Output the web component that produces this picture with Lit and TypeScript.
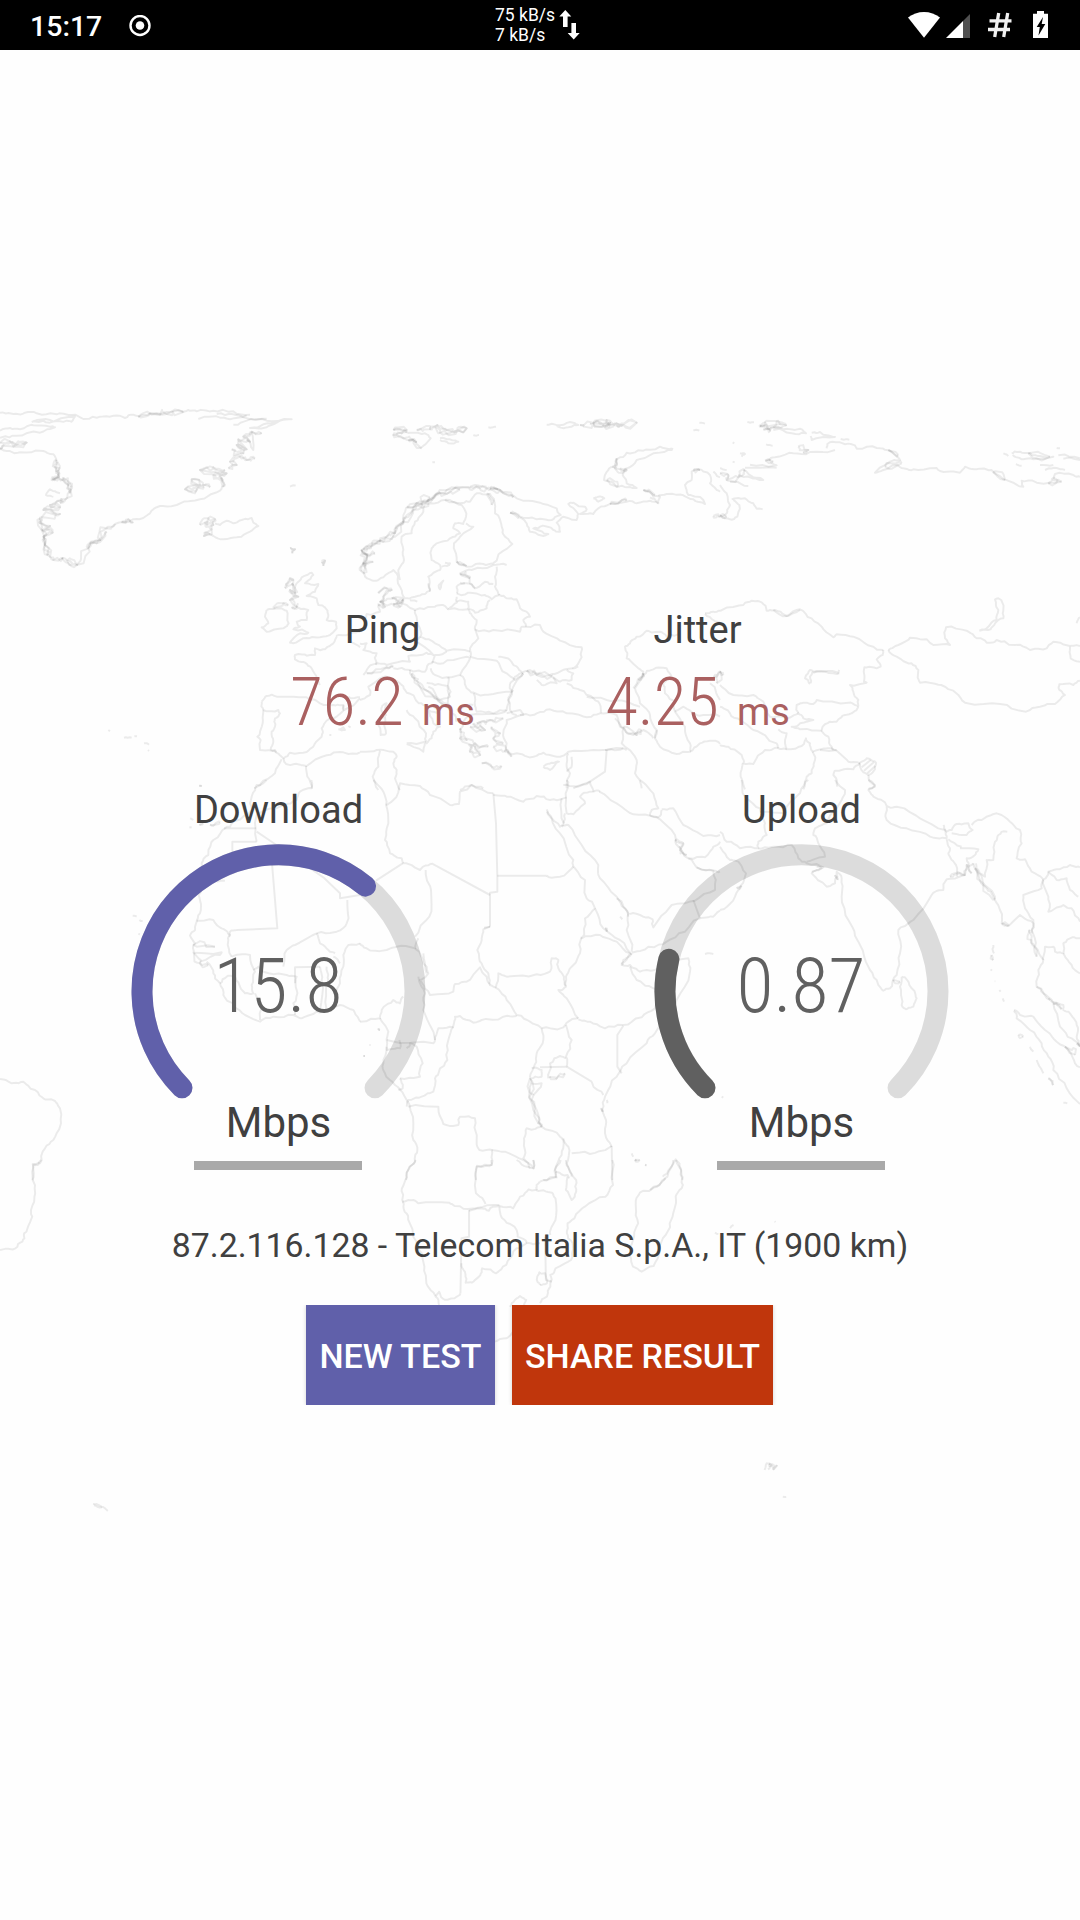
import { LitElement, html, svg, css } from "lit";
import { customElement, property } from "lit/decorators.js";

/* Map outlines. Each tile has its own origin and scale; a line is "kind x,y x,y ...",
   where the kind is s (straight), r (slightly rugged), R (fjord coast). */
interface Tile { x: number; y: number; sx: number; lines: string[] }

const TILES: Tile[] = [
  { x: 0, y: 390, sx: 1 / 3, lines: [
    "r 0,68 40,72 75,68 110,70 170,73 215,75 250,87 300,80 340,77 375,84 400,74 440,75 500,66 550,66 565,60 590,64 640,62 700,64 750,74",
    "R 415,80 450,70 500,72 550,66", "r 595,87 660,83 690,88 740,76", "r 650,72 700,73 730,82 800,92 875,88 830,98 800,112 750,114 790,103 830,98",
    "r 700,104 740,92 800,86", "r 0,122 30,114 60,118 100,106 150,110 165,112 120,128 50,137 0,143", "r 95,96 150,90 200,92 215,95 225,80 150,98 100,94",
    "R 0,158 30,154 50,164 80,158 40,170 10,166 0,175", "r 0,175 20,183 60,187 130,183 160,193 170,215",
    "R 170,210 165,232 178,250 160,268 185,270 210,280 212,300 200,325 180,340", "R 172,215 176,260 155,272", "R 190,262 205,285 210,310",
    "r 180,310 150,298 138,315 160,320", "R 190,335 150,345 180,352 130,360 180,372 125,382 120,400 150,408 128,420 158,428 130,440 135,465 150,500 160,510 190,505",
    "R 120,385 125,420 135,460 145,495", "R 185,505 210,525 230,525 200,512", "R 230,525 265,475 300,450 320,415 345,402",
    "r 345,402 385,396 430,384 450,370 480,348 530,345 600,328 660,302 672,285 660,262", "R 260,468 290,460 320,425", "R 365,395 385,388 400,396",
    "R 672,290 665,265 640,255 680,250 600,240 640,232 675,240", "R 630,292 610,285 575,268 600,285 555,298 590,300 612,290",
    "R 685,235 710,225 690,215 720,200 740,210 765,206", "R 695,178 730,190 710,165 740,178 715,148 750,155 730,140 755,125 785,128", "r 755,125 760,180 740,150",
    "r 870,290 887,286",
    "R 600,405 625,385 645,388 640,405 615,398 635,418 612,438 630,432", "r 645,400 660,405 680,392 700,400 725,390 755,384 760,398 775,408 750,425 710,442 670,448 640,438 630,430",
    "R 870,475 885,478 877,490", "R 965,520 975,512 970,528", "r 325,1020 330,1024", "r 372,1043 395,1043", "r 403,1039 411,1039", "r 432,1060 447,1064", "r 444,1080 447,1083", "r 597,1188 605,1188",
    "R 855,595 870,565 880,570 860,590", "R 875,580 885,610 870,600 895,620 870,630 890,650 875,655",
    "r 885,610 890,580 905,562 935,548 940,555 915,580 955,582 945,605 920,618 950,625 955,645 975,652 985,675 980,690 1008,695 1010,715 990,735 960,742 920,744 880,760 870,758 900,730 925,728 880,718 900,710 890,695 920,690 925,660 890,650 895,640",
    "r 800,660 830,655 860,662 866,700 850,715 800,725 785,712 805,700 795,680 800,660", "R 822,655 850,640 865,645",
    "r 1010,740 1000,760 975,778 945,775 945,795 920,797 885,795 885,808 915,818 935,835 950,865 960,885",
    "r 1008,738 1050,730 1080,725", "r 1050,755 1080,772",
    "r 785,935 800,918 815,914 830,920 920,922 960,940 1000,945 1030,945 1030,962 990,985 965,1015 965,1040 940,1070 920,1086 870,1088 850,1105 825,1080 780,1080 782,1050 772,1040 788,1000 790,965 785,935",
    "r 790,960 835,960 840,970 825,985 825,1010 815,1025 820,1055 812,1078 830,1085", "r 1015,1018 1030,1012 1035,1020 1015,1018", "r 1045,1008 1052,1012", "r 988,1035 994,1035",
    "r 850,1105 858,1122 900,1124 920,1128 980,1096 1030,1087 1080,1087", "r 845,1108 825,1150 790,1172 763,1195", "r 918,1128 922,1160 935,1195",
    "r 1030,945 1032,960 1080,925", "r 1045,920 1080,922"
  ] },
  { x: 360, y: 390, sx: 1 / 3, lines: [
    "R 100,120 140,120 125,130 100,135 130,145 160,150 185,175", "r 185,172 212,145 195,130 150,128 130,120 100,120", "R 170,120 210,118 232,105 260,120 320,115 290,125 240,128 225,112",
    "r 240,145 270,148 295,155 265,160 240,150", "R 145,150 170,158", "r 340,135 357,135", "r 385,112 408,110", "r 217,217 225,217",
    "r 560,104 600,106 640,98 655,105 625,112 590,108", "R 660,105 700,98 740,90 770,100 830,98 780,104 730,106 690,100", "R 700,98 750,98 735,108", "r 1018,98 1035,101", "r 1000,121 1018,122",
    "r 935,175 900,170 850,182 800,188 770,208 765,230 745,240 732,270 770,290 800,292 830,294 800,280 788,255 800,235 830,210 880,190 935,180 938,174", "R 770,205 765,235 800,240 780,235", "R 740,270 775,288",
    "r 850,300 880,320 900,320 895,340 870,322", "R 850,300 885,315", "r 895,318 920,312 970,316 1000,328 1035,342 1030,330 985,315 975,285 995,270 995,245 1015,238 1050,255 1050,280 1070,300 1080,305", "r 1060,245 1080,262", "R 1000,240 1020,240", "R 1060,378 1080,380",
    "r 700,325 715,320 733,325 715,335 700,325",
    "r 400,290 430,310 470,325 540,338 590,355 602,375 575,390 530,388 480,380 450,368", "R 390,295 420,300 460,322", "R 450,368 478,382",
    "r 480,382 500,400 510,425 550,438 565,432 520,415 540,410 580,420 600,425 590,398 610,380 650,390 655,372 625,342 640,338 675,350 680,358 660,372 700,372 715,355 755,340 800,335 830,340 870,332 895,340",
    "R 750,342 800,332",
    "R 5,545 10,520 5,480 50,460 80,440 105,430 130,395 160,360 185,335 230,312 260,300 310,292 350,290 380,295 415,298", "R 10,478 60,452 100,438 130,400 160,352 205,330 240,310 300,298", "R 140,350 170,340 210,322", "R 5,480 20,510 10,550", "R 10,490 45,490", "R 8,520 40,515", "r 330,290 345,285 380,290",
    "r 5,545 15,560 40,572 70,562 100,540 110,550 120,590 135,625 165,620 195,612 210,600 205,560 240,540 240,525 215,510 215,475 230,460 270,445 300,430 280,415 285,400 310,402 318,380 305,345 270,330 225,340 195,342 190,365 165,395 155,430 125,440 130,480 132,510 115,540 120,570",
    "r 245,530 270,520 255,518", "r 255,330 300,340 330,335 350,310 390,312 405,345 405,370 425,410 435,440 457,462 410,512 370,522 320,530 290,515 282,460 300,440 340,410 318,400", "R 290,515 320,528", "R 385,310 395,345",
    "r 235,585 250,572 240,598 235,585", "r 205,580 210,605", "r 440,525 400,525 335,540 300,550 330,560 330,580 345,595 375,575 400,582", "R 300,552 330,565", "r 410,530 405,560 405,590 418,615", "r 300,578 318,580 345,595",
    "r 290,610 290,590 315,580", "r 290,610 330,608 375,615 395,628 418,615 440,625 470,628 480,655 510,680 490,690 498,710", "r 390,630 380,655 345,668 325,655 325,635 290,635", "r 290,620 290,638 265,658 325,658",
    "r 110,640 140,645 165,660 225,650 245,645 265,658", "r 325,658 335,675 350,690 345,710 355,745 330,775 330,800", "r 345,718 400,720 480,725 485,710 540,705 550,725 600,752 665,772 665,802 640,835 655,830", "r 165,660 172,700 182,740 225,760 260,782 330,785",
    "R 55,610 80,595 95,600 70,620 60,635 75,650 55,645", "R 95,625 130,628 120,650 100,640", "R 60,635 110,640 130,630", "r 150,630 172,635", "r 55,640 60,665 20,672 15,690",
    "r 0,760 20,760 10,780 50,790 48,825", "r 182,740 165,755 220,795 200,788 145,798 150,815 80,825 50,820 20,840 10,855", "R 20,850 80,832 100,830", "r 100,835 150,840 195,845 215,820 225,795 260,785",
    "r 215,815 250,820 320,800 330,805 300,855 260,862 225,855 212,835", "r 330,800 410,812 440,850 465,870 490,850", "r 415,800 450,810 475,835 485,850 465,860 450,880", "r 300,855 320,895 350,912 400,912 455,905 450,880",
    "r 265,860 272,905 265,920 270,950", "r 150,840 165,870 205,905 250,945 285,975 290,995", "r 200,878 225,885 262,888 270,920 240,930 205,890", "R 155,850 180,890 225,925 260,950",
    "r 0,930 30,915 25,890 60,865 90,862 120,880 135,900 165,925 190,945 235,960 230,968 205,960 220,1000 240,1010 220,1025 215,1045 200,1060 198,1030 165,985 140,960",
    "r 60,985 75,980 78,1030 62,1035 55,1005 60,985", "r 68,945 80,940 78,975 65,965 68,945", "r 140,1060 195,1055 190,1085 140,1062",
    "r 340,910 345,945 350,965 400,970 440,960 445,930 460,900", "r 290,960 320,945 340,945", "r 300,1020 330,975 400,972 440,960",
    "R 300,1015 320,1050 300,1045 345,1070 360,1095 330,1085 345,1060 385,1070", "R 340,1000 375,1020 330,1010", "R 350,1000 390,990 430,985", "R 365,1120 395,1130 425,1128", "R 395,1010 420,1030 400,1045 430,1060", "R 400,1070 440,1080 455,1100",
    "r 440,970 480,960 490,975 440,990 430,1030 440,1060 435,1085 470,1090 520,1100 550,1088 590,1100 625,1085 700,1080 790,1075 800,1080",
    "r 550,1130 575,1118 597,1115 570,1140 550,1130", "r 480,975 530,970 570,958 620,970 680,982 720,970 722,950 700,925 660,900 620,880",
    "r 490,850 460,890 445,930 450,960 470,975", "r 485,850 510,840 540,852 570,855 600,845 640,835", "r 530,870 545,885 560,882 590,880 575,855", "R 500,842 530,855 575,860", "r 580,862 600,875 635,870 640,850 620,840",
    "r 680,920 740,930 800,935 840,950", "r 722,970 770,975 780,1010 820,1035 850,1020 880,1045", "r 765,985 790,1015 785,1060 830,1110 825,1150 845,1195", "R 790,1010 830,1035 845,1020",
    "r 850,850 825,895 840,940 870,975 890,1020 885,1045", "r 850,855 880,838 920,835 935,860 910,880 915,910 945,935 945,965 975,1010 990,1060 990,1085 950,1092 900,1070 885,1045 890,1020",
    "r 945,965 970,950 1000,970 1030,975 1080,980", "r 990,1085 1020,1060 1050,1052 1080,1062", "r 820,895 850,845 830,830 800,805 795,770 810,760 830,740 860,722 900,725 920,740 960,735",
    "R 835,870 850,850", "r 1035,670 1060,665 1080,662", "r 1035,672 1060,690 1080,695", "R 1060,860 1080,845 1070,880", "r 1050,880 1080,930",
    "r 0,1085 50,1080 100,1085 110,1100 100,1120 110,1140 105,1165 120,1200", "r 60,1082 55,1130 38,1160 55,1200", "r 300,1200 335,1185 370,1195",
    "s 740,1080 735,1145 690,1175", "r 625,1090 620,1130 630,1150 620,1195", "r 690,1175 640,1195", "r 635,1100 635,1130 620,1145", "r 735,1080 790,1075"
  ] },
  { x: 720, y: 390, sx: 1 / 3, lines: [
    "r 82,96 102,97", "R 118,110 135,97 170,94 198,106 160,112 150,122 130,118", "R 120,108 150,118", "r 160,112 190,118 240,116 258,130 215,130 160,120", "r 275,128 300,126 345,141 275,150 272,138", "r 362,147 388,149",
    "r 320,175 322,162 360,157 405,166 410,176 470,174 500,180 535,203 540,210 510,215 465,248 490,240 530,225 550,235 580,238 650,234 660,243 720,248 735,230 770,238 815,240 850,268 910,290 905,272 950,278 1025,275",
    "R 505,180 535,195", "R 235,170 265,180 250,186", "r 90,224 170,226 140,214 165,202 220,190 270,186 345,180", "R 135,212 160,215", "R 495,230 545,220", "R 820,245 855,270", "r 138,163 158,167", "r 60,190 75,192 65,200", "r 38,157 43,160", "r 38,215 44,217",
    "r 850,190 865,198", "r 875,190 900,185 930,190 960,198 1000,200 940,208 905,208 878,195", "R 925,190 990,200", "r 1010,174 1020,175", "r 1015,196 1080,205", "r 1030,206 1080,210", "r 888,222 905,227", "r 960,225 1000,225", "r 975,240 1010,234 1035,240", "r 1025,275 1000,270 1005,252 1060,255 1080,260", "R 985,280 1010,268",
    "r 0,235 20,240", "R 0,250 25,255 20,270 55,262 75,240", "r 30,275 85,288", "r 55,255 90,262 130,270 100,262 70,240", "r 75,233 170,233", "r 35,328 75,325 100,340 110,356 128,358", "r 0,285 20,310 30,345 20,370 0,380", "r 40,330 58,345 52,380 30,388 0,378", "R 0,376 20,380",
    "r 0,663 70,645 95,632 125,637 140,662 165,660 200,678 240,658 275,685 305,710 340,742 350,733 400,740 460,770 490,780", "r 160,660 205,678 240,660",
    "r 505,780 535,765 570,743 620,748 640,765 690,765 675,745 678,712 740,722 770,745 800,758 830,750 885,765 930,780 980,775 1000,755 1050,768 1080,768", "r 1050,770 1052,805 1080,815", "r 1070,700 1080,682",
    "r 505,780 530,800 575,820 595,840 600,878 655,884 700,902 735,938 840,942 918,965 960,950 1005,942 1035,915 1018,900 1018,883 1060,885 1080,872",
    "r 778,722 800,715 830,690 835,660 825,628 835,625 850,660 850,685 825,700 812,718 778,722",
    "r 490,780 488,795 470,808 482,830 470,835 433,832 432,875 440,878 390,885 400,905 415,930 415,948 385,938 290,930 280,942 250,938 230,945 235,970",
    "r 270,882 255,865 270,840 290,845 355,848 358,840", "r 358,850 340,850 290,843 270,860 272,880", "r 415,950 395,970 375,975 350,995 330,995 308,1010 305,1022 325,1040 335,1070 340,1080",
    "r 0,885 40,915 100,915 130,935 150,980 200,985 235,970 250,985 280,990 240,1000 215,1010 240,1018 305,1022", "r 0,950 30,970 60,990 100,1020 170,1060 175,1075", "r 175,1018 200,1030 195,1060 200,1078 245,1068 258,1045 270,1060 278,1085 320,1075 350,1082 385,1115 420,1120",
    "r 0,1065 25,1070 65,1095 70,1120 100,1122 135,1080 170,1073 200,1078", "r 68,1120 62,1160 75,1198", "r 278,1085 285,1110 275,1150 260,1160 250,1198", "r 300,1080 350,1080",
    "r 420,1118 440,1105 468,1118 465,1138 445,1155 420,1130 420,1118", "s 425,1132 452,1110", "s 432,1142 462,1116", "s 442,1150 466,1128", "r 445,1155 450,1175 465,1190 445,1198", "r 420,1120 400,1138 345,1142 340,1155 352,1190", "R 0,845 10,855"
  ] },
  { x: 0, y: 780, sx: 1 / 3, lines: [
    "r 598,16 606,18", "r 570,115 580,120", "r 568,142 575,142", "R 598,135 610,130", "R 630,134 660,128", "r 935,0 935,25 900,35 890,60 850,75 770,105 770,185", "r 800,0 770,15 755,50 755,90 700,125 675,145 640,180 625,225 605,250 600,300 596,345 603,380 600,400 590,425 585,450 570,467 585,490 580,520",
    "s 672,145 768,145", "s 770,155 825,192 970,292 1020,340 1020,355 1080,345", "s 770,185 697,185 697,230", "s 816,250 832,445 710,450", "r 590,422 640,420 665,445 690,465 685,480 695,530", "r 710,450 690,455 688,470", "R 580,495 645,500", "r 580,518 665,517 660,525 600,545", "R 582,520 600,550 625,555",
    "r 620,545 640,580 660,610 670,645 700,670 735,705 780,725 820,710 880,705 905,715 950,695 985,690 1020,675 1060,690 1080,725",
    "r 695,530 750,525 765,575 755,615 760,640 735,640 720,620", "r 760,570 775,560 790,575 860,585 890,590 890,630 880,670 885,705", "r 780,720 785,680 765,640", "r 660,610 680,590 705,590 720,620",
    "r 850,560 860,510 885,495 950,460 1010,455 1040,430 1042,360", "s 885,610 885,562 960,560", "r 950,460 960,490 985,510 1005,520", "r 960,560 965,600 960,690", "r 980,560 985,600 980,690", "r 1080,490 1045,495 1030,525 1030,560 1020,610 1005,640 1008,680", "r 1000,530 1020,550",
    "r 398,407 410,410", "r 418,420 428,423", "r 415,462 420,463", "r 650,305 675,302",
    "r 0,897 35,910 70,905 105,930 130,955 165,963 180,985 183,1030 160,1080 135,1105 120,1150 100,1155 97,1200"
  ] },
  { x: 360, y: 780, sx: 1 / 3, lines: [
    "r 40,0 70,35 78,75 85,130 75,180 90,220 125,235 130,250", "r 78,75 100,60 120,10 180,18 210,45 270,75 297,72 300,35 335,15 400,40", "s 400,40 408,130 412,290 412,335 390,338 390,440", "s 48,302 128,250", "r 128,250 180,270 215,250", "s 215,250 390,345",
    "r 400,45 440,50 490,65 530,48 570,60 620,52", "s 412,287 560,287", "r 560,287 600,290 640,260", "r 197,270 213,330 208,410 165,470", "r 0,490 20,505 80,510 110,500 165,505 175,475", "r 165,505 180,520 200,560 205,580 180,600 210,645 280,635 285,612 320,605 360,562 380,590 390,615",
    "r 175,590 195,640 190,690 225,780 220,790 80,780", "r 190,520 200,580", "r 390,440 370,448 365,475 352,510 365,550 385,580 388,612", "s 390,440 372,443", "r 388,615 408,620 415,580 440,590 530,583 570,575 575,535 595,540 595,565 612,590 618,620 595,630 620,655 655,715",
    "r 405,622 440,660 470,705 510,725 545,745 610,742 625,725 655,715", "r 665,470 660,520 635,560 618,590 618,618", "r 640,260 675,300 680,355 705,385 675,415 665,475 720,465 770,485 810,520 785,550 790,555",
    "r 560,88 570,110 600,140 610,135 615,100", "r 560,95 600,160 640,240 640,260", "r 605,140 625,135 665,195 715,255 720,295 770,350 805,400 800,450 815,515", "R 735,445 740,455", "r 705,385 730,445 780,480 815,525", "r 780,410 787,418", "r 770,355 805,410",
    "r 620,0 625,20 620,100 640,103 675,70 660,50 690,35 720,35", "r 605,55 612,130", "r 610,15 655,20 690,5 700,35", "r 718,35 770,70 820,103 895,112 905,90", "r 840,0 880,40 895,85 875,90 870,105 900,118 945,165 955,200 985,235 1010,262 1065,272 1080,275",
    "r 905,88 940,85 970,135 1030,168 1080,165", "R 945,180 970,190 960,210 980,225", "r 985,235 1035,232 1060,200 1080,185", "r 1010,262 1060,272 1065,330 1005,362 935,375 880,442 878,418 840,405 808,402", "s 1000,360 1020,415", "r 1020,415 1060,410 1080,392", "r 1020,415 975,455 920,485 865,500 815,518",
    "r 815,520 790,540 785,555 810,555 840,575 885,570 985,535 990,575 950,660 885,760 860,790 800,850 770,890 735,950 728,985 738,1020 735,1060 755,1100", "r 810,560 830,600 880,625 920,630 885,685 845,712 790,735 735,745 690,725 655,718", "s 790,737 772,765 772,860 785,880", "r 1035,522 1060,522",
    "r 80,780 80,810 120,805 118,780", "r 80,800 70,850 75,880 105,915 140,960 160,1030 160,1080 172,1110 165,1145 145,1170 138,1200", "r 145,980 235,980 250,1032 295,1035 300,1010 345,1015 350,1080 358,1110 395,1110 395,1155 350,1160 348,1200",
    "r 0,725 60,715 65,690 100,660 120,670 130,650", "r 60,715 85,755 80,780", "R 55,745 60,750", "r 28,795 32,795", "R 10,828 15,828", "r 225,780 235,745 278,742 265,780 262,840 240,865 225,895 220,935 185,950 145,960 140,980", "r 120,895 180,890 188,850 170,800 150,790 140,805", "r 120,895 128,925 115,930",
    "r 278,745 285,710 300,708 340,728 365,720 430,710 470,708", "r 545,745 550,780 530,820 520,865 510,890 510,930 520,990 545,1040", "R 510,895 515,960 535,1030 545,1040", "r 515,865 545,870 545,890 515,895", "s 540,862 620,860", "r 515,910 545,910 520,945", "r 618,735 635,780 618,830 620,860", "s 620,860 695,905", "r 695,905 730,945", "r 565,895 570,850 600,828 618,835", "R 568,890 590,895 615,880",
    "r 545,1040 600,1070 610,1080 605,1125 585,1170 590,1195", "r 545,1040 500,1045 492,1075 495,1110 490,1135 520,1165 520,1140", "r 395,1110 435,1115 490,1140 510,1165", "r 610,1075 625,1100 620,1150 635,1190", "r 635,1120 690,1122 755,1098", "s 755,1098 757,1200", "r 815,1120 820,1130", "r 825,1138 830,1142", "r 855,1155 860,1157", "r 908,1190 930,1165 947,1138 962,1165 967,1200", "r 550,1200 590,1190", "r 740,960 742,970", "R 725,985 728,995"
  ] },
  { x: 720, y: 780, sx: 1 / 3, lines: [
    "r 65,0 75,50 120,85 135,130 140,165 115,185 115,205 60,205 20,185 0,155", "r 115,205 160,200 215,195 235,235 260,250 310,262 290,270 275,280 320,320 345,310 350,275 365,295 365,350 385,420 415,485 450,570 475,615 490,632 510,625 530,585 540,520 535,450 580,420 635,345 670,330 680,298 735,285",
    "r 265,0 240,40 200,80 195,100 120,95", "r 345,0 375,30 365,60 320,130 285,145 280,165 295,190 315,230 260,245", "r 0,200 30,240 55,245 78,280 60,320 45,350 15,385 0,390", "R 50,325 65,318", "r 290,260 305,265 275,275", "R 345,285 352,300",
    "r 445,0 465,15 445,30 460,50 500,78 530,80 600,115 675,150 680,175 630,170 560,145 500,120 500,80", "r 670,135 680,155 695,150 710,132 745,130 758,150 740,165 695,160", "r 755,135 785,120 830,100 870,125 900,150 905,190 890,235 915,238 935,275 970,298 985,275 1010,268 1050,255 1080,262",
    "r 680,178 690,205 685,220 695,240 708,255 710,290", "r 685,178 725,200", "r 720,205 775,208 765,225 740,235 745,260 760,250", "R 690,290 735,285 740,255 755,280", "r 760,250 780,300 800,325 820,350 840,390 845,430 865,438 900,405 940,430 935,450 945,500 970,540 955,570 950,620 990,660", "R 765,265 790,310 825,358", "R 845,432 865,438",
    "r 862,155 835,165 825,185 820,240 800,240 795,290 780,280 768,250", "r 970,298 965,325 910,345 915,385 940,420 935,460", "r 970,300 985,350 985,395 1030,375 1055,385 1080,425", "r 985,275 1010,300 1040,295 1050,330 1075,350", "r 970,540 975,500 1000,500 1005,515 1030,520 1030,490 1050,475 1080,475", "r 1030,520 1055,555 1080,580",
    "R 930,450 935,490 950,530", "r 950,620 970,640 1000,670 1020,740 1055,775 1080,795", "r 985,655 1030,675 1030,690 1050,700 1070,735 1070,770 1080,800", "R 1000,670 1025,688", "r 820,495 822,520", "R 815,525 820,540", "r 812,568 816,572", "r 838,630 842,635", "r 848,655 852,665", "r 824,604 826,604",
    "r 545,590 555,592 575,625 590,655 580,680 558,688 545,675 540,620 545,590", "R 520,600 540,605",
    "r 882,690 900,705 940,710 975,750 1010,785 1050,815 1065,850 1080,862", "r 882,692 890,715 930,750 965,790 985,830 1000,870 1040,925 1080,972", "R 895,765 910,770", "r 930,800 940,815", "r 950,840 970,880", "R 985,895 1000,915", "R 1035,800 1065,825", "R 1070,790 1080,800", "r 1030,968 1042,970", "r 5,950 10,953"
  ] },
  { x: 0, y: 1160, sx: 540 / 1568, lines: [
    "r 120,0 110,15 95,12 95,60 100,110 90,150 88,185 70,220 65,245 45,265 0,270", "r 270,1032 295,1040 313,1053", "r 273,1036 296,1042",
    "r 1207,0 1185,30 1172,75 1168,120 1175,155 1190,190 1200,230 1228,300 1238,370 1265,410 1275,435", "r 1168,125 1200,120 1215,130 1305,128 1320,138 1380,145 1450,135", "r 1427,0 1427,15 1385,17 1382,100 1410,132", "s 1362,150 1362,230 1340,235 1337,400",
    "r 1337,400 1320,415 1285,415 1275,395 1265,408", "r 1362,152 1400,145 1420,152 1450,138 1490,145 1510,110 1535,88 1568,92", "r 1450,140 1465,180 1500,210 1503,230 1530,248 1568,250", "r 1340,310 1350,335 1352,368 1370,368 1395,345 1400,325 1440,340 1460,320 1485,290 1500,265 1530,248", "r 1480,440 1495,420 1510,408 1528,420 1520,440", "r 1437,545 1470,535 1490,515", "r 1500,0 1530,20 1550,25 1548,0", "r 1568,65 1558,75 1560,90", "r 1568,335 1560,350 1568,375"
  ] },
  { x: 540, y: 1160, sx: 540 / 1568, lines: [
    "r 0,65 45,50 45,25 60,0", "r 75,0 85,30 105,60 105,95 92,120 75,90 80,50", "r 0,92 35,98 45,115 45,180 30,225", "r 210,0 212,75 190,110 130,140 100,175 80,190 78,220 95,250 90,300 45,325 30,345 30,380 20,410 0,430", "r 45,35 80,45 85,55", "r 0,340 15,340 20,370 0,375", "s 15,230 17,360 35,365",
    "r 387,0 370,50 340,80 290,98 278,135 285,190 270,240 260,285 270,320 295,335 330,318 345,270 365,225 385,170 395,120 405,90 415,75 410,30 395,0", "r 320,90 365,55", "R 275,0 290,0", "r 305,14 309,15", "r 552,205 562,195", "r 508,218 518,222", "r 681,184 684,186",
    "r 652,930 658,910 672,915 662,928", "R 665,912 678,928 688,915", "r 705,1010 715,1011"
  ] }
];

/* Deterministic midpoint displacement, so a coast is drawn the same way every time. */
function makeNoise(seed: number): () => number {
  let s = seed;
  return () => { s = (s * 16807) % 2147483647; return s / 2147483647 - 0.5; };
}

function outline(line: string, seed: number): string {
  const [kind, ...rest] = line.split(" ");
  let pts = rest.map((p) => p.split(",").map(Number));
  const noise = makeNoise(seed);
  for (let n = 0; n < 5; n++) noise();
  const amp = kind === "R" ? 0.75 : kind === "r" ? 0.3 : 0;
  const passes = kind === "s" ? 0 : 2;
  for (let n = 0; n < passes; n++) {
    const next: number[][] = [pts[0]];
    for (let i = 1; i < pts.length; i++) {
      const [ax, ay] = pts[i - 1];
      const [bx, by] = pts[i];
      const d = Math.min(Math.hypot(bx - ax, by - ay), 32);
      if (d > 7) next.push([(ax + bx) / 2 + noise() * d * amp, (ay + by) / 2 + noise() * d * amp]);
      next.push([bx, by]);
    }
    pts = next;
  }
  return "M" + pts.map(([x, y]) => `${x.toFixed(1)} ${y.toFixed(1)}`).join("L");
}

@customElement("world-map")
class WorldMap extends LitElement {
  static styles = css`
    :host { display: block; }
    .map { display: block; width: 1080px; height: 1920px; }
    .line { fill: none; stroke: #000; stroke-opacity: 0.075; stroke-width: 2; stroke-linejoin: round; vector-effect: non-scaling-stroke; }
    .coast { stroke-opacity: 0.07; }
  `;
  render() {
    return html`<svg class="map" viewBox="0 0 1080 1920" aria-hidden="true">
      ${TILES.map((t, ti) => svg`<g transform="translate(${t.x} ${t.y}) scale(${t.sx} ${1 / 3})">
        ${t.lines.map((l, i) => {
          const seed = 97 + ti * 991 + i * 37;
          const coast = l[0] === "R";
          return svg`<path class="line ${coast ? "coast" : ""}" d=${outline(l, seed)}></path>
            ${coast ? svg`<path class="line coast" d=${outline(l, seed + 5003)}></path>` : ""}`;
        })}
      </g>`)}
    </svg>`;
  }
}

@customElement("speed-gauge")
class SpeedGauge extends LitElement {
  @property() label = "";
  @property() value = "";
  @property() color = "#000";
  @property({ type: Number }) sweep = 0;

  static styles = css`
    :host { display: flex; flex-direction: column; align-items: center; }
    .label { font-size: 38px; line-height: 50px; padding-left: 1px; }
    .dial { display: grid; width: 294px; height: 253px; margin-top: 9px; }
    .dial > * { grid-area: 1 / 1; }
    .ring { width: 294px; height: 294px; overflow: visible; }
    .arc { fill: none; stroke-width: 21; stroke-linecap: round; }
    .track { stroke: rgba(0, 0, 0, 0.135); }
    .value { justify-self: center; margin-top: 92px; font-family: "Roboto Condensed", Roboto, sans-serif; font-stretch: 75%; font-weight: 300; font-size: 76px; line-height: 100px; height: 100px; color: #606060; }
    .unit { font-size: 42px; line-height: 50px; padding: 1px 0 0 1px; }
    .bar { width: 168px; height: 9px; margin-top: 13px; background: #a9a9a9; }
  `;

  private arc(sweep: number): string {
    const at = (deg: number) => {
      const a = (deg * Math.PI) / 180;
      return `${147.5 + 136.5 * Math.cos(a)} ${147.3 + 136.5 * Math.sin(a)}`;
    };
    return `M${at(135)}A136.5 136.5 0 ${sweep > 180 ? 1 : 0} 1 ${at(135 + sweep)}`;
  }

  render() {
    return html`
      <div class="label">${this.label}</div>
      <div class="dial">
        <svg class="ring" viewBox="0 0 294 294">
          <path class="arc track" d=${this.arc(270)}></path>
          <path class="arc" stroke=${this.color} d=${this.arc(this.sweep)}></path>
        </svg>
        <div class="value">${this.value}</div>
      </div>
      <div class="unit">Mbps</div>
      <div class="bar"></div>`;
  }
}

@customElement("status-bar")
class StatusBar extends LitElement {
  static styles = css`
    :host { display: grid; grid-template-columns: 495px 1fr auto; height: 50px; background: #000; color: #fff; }
    .left { display: flex; align-items: center; padding-left: 30px; }
    .time { font-size: 28.5px; font-weight: 500; line-height: 50px; width: 99px; padding-top: 2px; }
    .net { display: flex; }
    .rates { font-size: 17.5px; line-height: 20px; padding-top: 5px; width: 63px; white-space: nowrap; }
    .icon { display: block; fill: #fff; }
    .dim { fill: #505050; }
    .cut { fill: #000; }
    .ringed { fill: none; stroke: #fff; stroke-width: 2.4; }
    .hash { fill: none; stroke: #f2f2f2; stroke-width: 3.3; }
  `;
  render() {
    return html`
      <div class="left">
        <div class="time">15:17</div>
        <svg class="icon" width="22" height="22" viewBox="0 0 22 22"><circle class="ringed" cx="11" cy="10.500" r="9.500"></circle><circle cx="11" cy="10.500" r="4.300"></circle></svg>
      </div>
      <div class="net">
        <div class="rates">75 kB/s<br>7 kB/s</div>
        <svg class="icon" width="24" height="50" viewBox="558 0 24 50"><path d="M565.3 10l6 6.500h-3.700V27h-4.600V16.500h-3.700z"></path><path d="M573.7 39.500l6-6.500h-3.700V23h-4.600v10h-3.700z"></path></svg>
      </div>
      <svg class="icon" width="180" height="50" viewBox="900 0 180 50">
        <path d="M908 17.500C917 10 931 10 940 17.500L924 37.700z"></path>
        <path d="M963 21v17h-17z"></path><path class="dim" d="M963 21l7-7v24h-7z"></path>
        <path class="hash" d="M998.700 13l-4 24M1007.700 13l-4 24M989.500 20.800h22M988 29.500h22"></path>
        <path d="M1037 11h7v2.700h4V38h-15V13.700h4z"></path><path class="cut" d="M1043 17l-6.300 10h3.100l-1.300 8.500 6.800-11.500h-3.600z"></path>
      </svg>`;
  }
}

@customElement("app-root")
class AppRoot extends LitElement {
  static styles = css`
    :host { display: block; position: relative; width: 1080px; height: 1920px; overflow: hidden; background: #fefefe; color: #404040; font-family: Roboto, sans-serif; }
    .backdrop { position: absolute; inset: 0; }
    .page { position: relative; display: flex; flex-direction: column; }
    .latency { display: grid; grid-template-columns: 315px 315px; justify-content: center; margin-top: 555px; }
    .metric { display: flex; flex-direction: column; align-items: center; }
    .name { font-size: 38px; line-height: 50px; }
    .reading { display: flex; align-items: baseline; gap: 18px; margin-top: 7px; height: 80px; color: #aa6060; }
    .figure { font-family: "Roboto Condensed", Roboto, sans-serif; font-stretch: 75%; font-weight: 300; font-size: 67px; line-height: 80px; }
    .suffix { font-size: 38px; line-height: 40px; }
    .gauges { display: grid; grid-template-columns: 523px 523px; justify-content: center; margin-top: 43px; padding-right: 1px; }
    .server { text-align: center; font-size: 33.8px; line-height: 50px; margin-top: 51px; }
    .actions { display: flex; justify-content: center; gap: 17px; margin-top: 34px; padding-right: 1px; }
    .button { border: 0; padding: 2px 0 0; width: 189px; height: 100px; background: #6060aa; color: #fff; font: 500 34px/50px Roboto, sans-serif; white-space: nowrap; box-shadow: 0 0 4px rgba(0, 0, 0, 0.18); clip-path: inset(0 -6px 0 -6px); }
    .share { width: 261px; background: #c0360c; }
  `;
  render() {
    return html`
      <world-map class="backdrop"></world-map>
      <div class="page">
        <status-bar></status-bar>
        <div class="latency">
          ${[["Ping", "76.2"], ["Jitter", "4.25"]].map(([name, value]) => html`
            <div class="metric">
              <div class="name">${name}</div>
              <div class="reading"><span class="figure">${value}</span><span class="suffix">ms</span></div>
            </div>`)}
        </div>
        <div class="gauges">
          <speed-gauge label="Download" value="15.8" color="#6060aa" .sweep=${174.6}></speed-gauge>
          <speed-gauge label="Upload" value="0.87" color="#606060" .sweep=${58.6}></speed-gauge>
        </div>
        <div class="server">87.2.116.128 - Telecom Italia S.p.A., IT (1900 km)</div>
        <div class="actions">
          <button class="button">NEW TEST</button>
          <button class="button share">SHARE RESULT</button>
        </div>
      </div>`;
  }
}
